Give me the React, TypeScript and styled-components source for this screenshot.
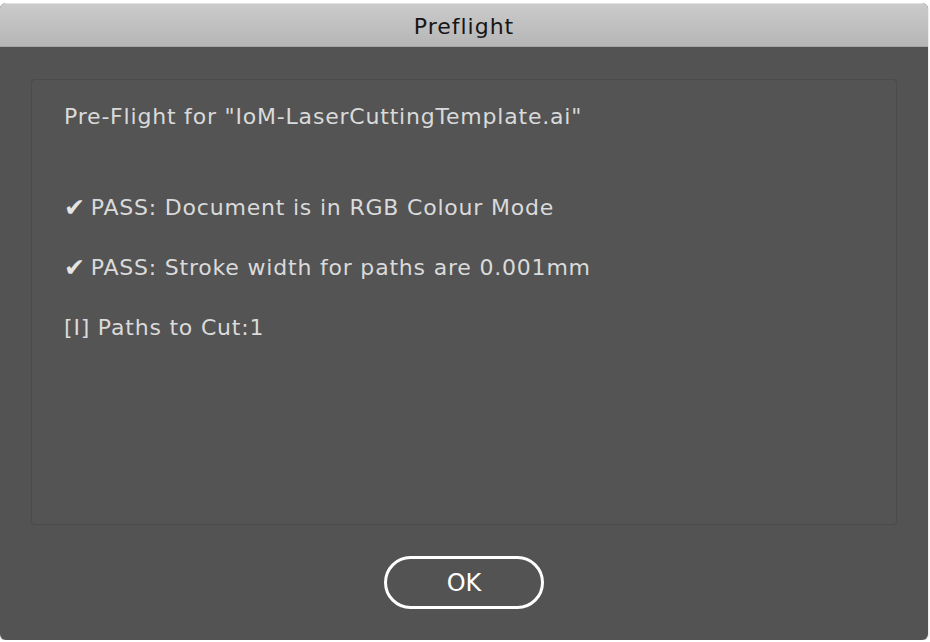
import styled, { createGlobalStyle } from "styled-components";

const GlobalStyle = createGlobalStyle`
  html, body {
    margin: 0;
    padding: 0;
    background: #ffffff;
  }
  body {
    font-family: "DejaVu Sans", "Liberation Sans", sans-serif;
  }
`;

const Window = styled.div`
  margin-top: 3px;
  width: 928px;
  height: 637px;
  border-radius: 6px;
  overflow: hidden;
  display: flex;
  flex-direction: column;
  background: #535353;
  box-shadow: 0 1px 2px rgba(0, 0, 0, 0.25);
`;

const TitleBar = styled.div`
  flex: none;
  display: flex;
  align-items: center;
  justify-content: center;
  background: linear-gradient(#cbcbcb, #b6b6b6);
  border-top: 1px solid #e2e2e2;
  border-bottom: 1px solid #a4a4a4;
  box-sizing: border-box;
  height: 44px;
  color: #161616;
  font-size: 22px;
  letter-spacing: 1px;
  padding-top: 3px;
`;

const Body = styled.div`
  flex: 1;
  display: flex;
  flex-direction: column;
  align-items: center;
  padding: 32px 31px 31px;
  gap: 31px;
`;

const Panel = styled.div`
  align-self: stretch;
  height: 446px;
  box-sizing: border-box;
  border: 1px solid #4b4b4b;
  border-radius: 4px;
  background: #545454;
  padding: 7px 32px;
  display: flex;
  flex-direction: column;
  color: #dadada;
  font-size: 22px;
  letter-spacing: 0.8px;
`;

const Line = styled.div<{ $gapAfter?: number }>`
  height: 60px;
  line-height: 60px;
  margin-bottom: ${(p) => p.$gapAfter ?? 0}px;
  white-space: nowrap;
`;

const Check = styled.span`
  display: inline-block;
  font-size: 25px;
  color: #e4e4e4;
  margin-right: 5px;
  vertical-align: top;
`;

const OkButton = styled.button`
  width: 160px;
  height: 53px;
  box-sizing: border-box;
  border: 3px solid #ffffff;
  border-radius: 27px;
  background: transparent;
  color: #ffffff;
  font-family: "DejaVu Sans", "Liberation Sans", sans-serif;
  font-size: 24px;
  padding: 0;
`;

const results = [
  { pass: true, text: "PASS: Document is in RGB Colour Mode" },
  { pass: true, text: "PASS: Stroke width for paths are 0.001mm" },
  { pass: false, text: "[I] Paths to Cut:1" },
];

export default function App() {
  return (
    <>
      <GlobalStyle />
      <Window>
        <TitleBar>Preflight</TitleBar>
        <Body>
          <Panel>
            <Line $gapAfter={31}>Pre-Flight for "IoM-LaserCuttingTemplate.ai"</Line>
            {results.map((r, i) => (
              <Line key={i}>
                {r.pass && <Check>✔</Check>}
                {r.text}
              </Line>
            ))}
          </Panel>
          <OkButton>OK</OkButton>
        </Body>
      </Window>
    </>
  );
}
